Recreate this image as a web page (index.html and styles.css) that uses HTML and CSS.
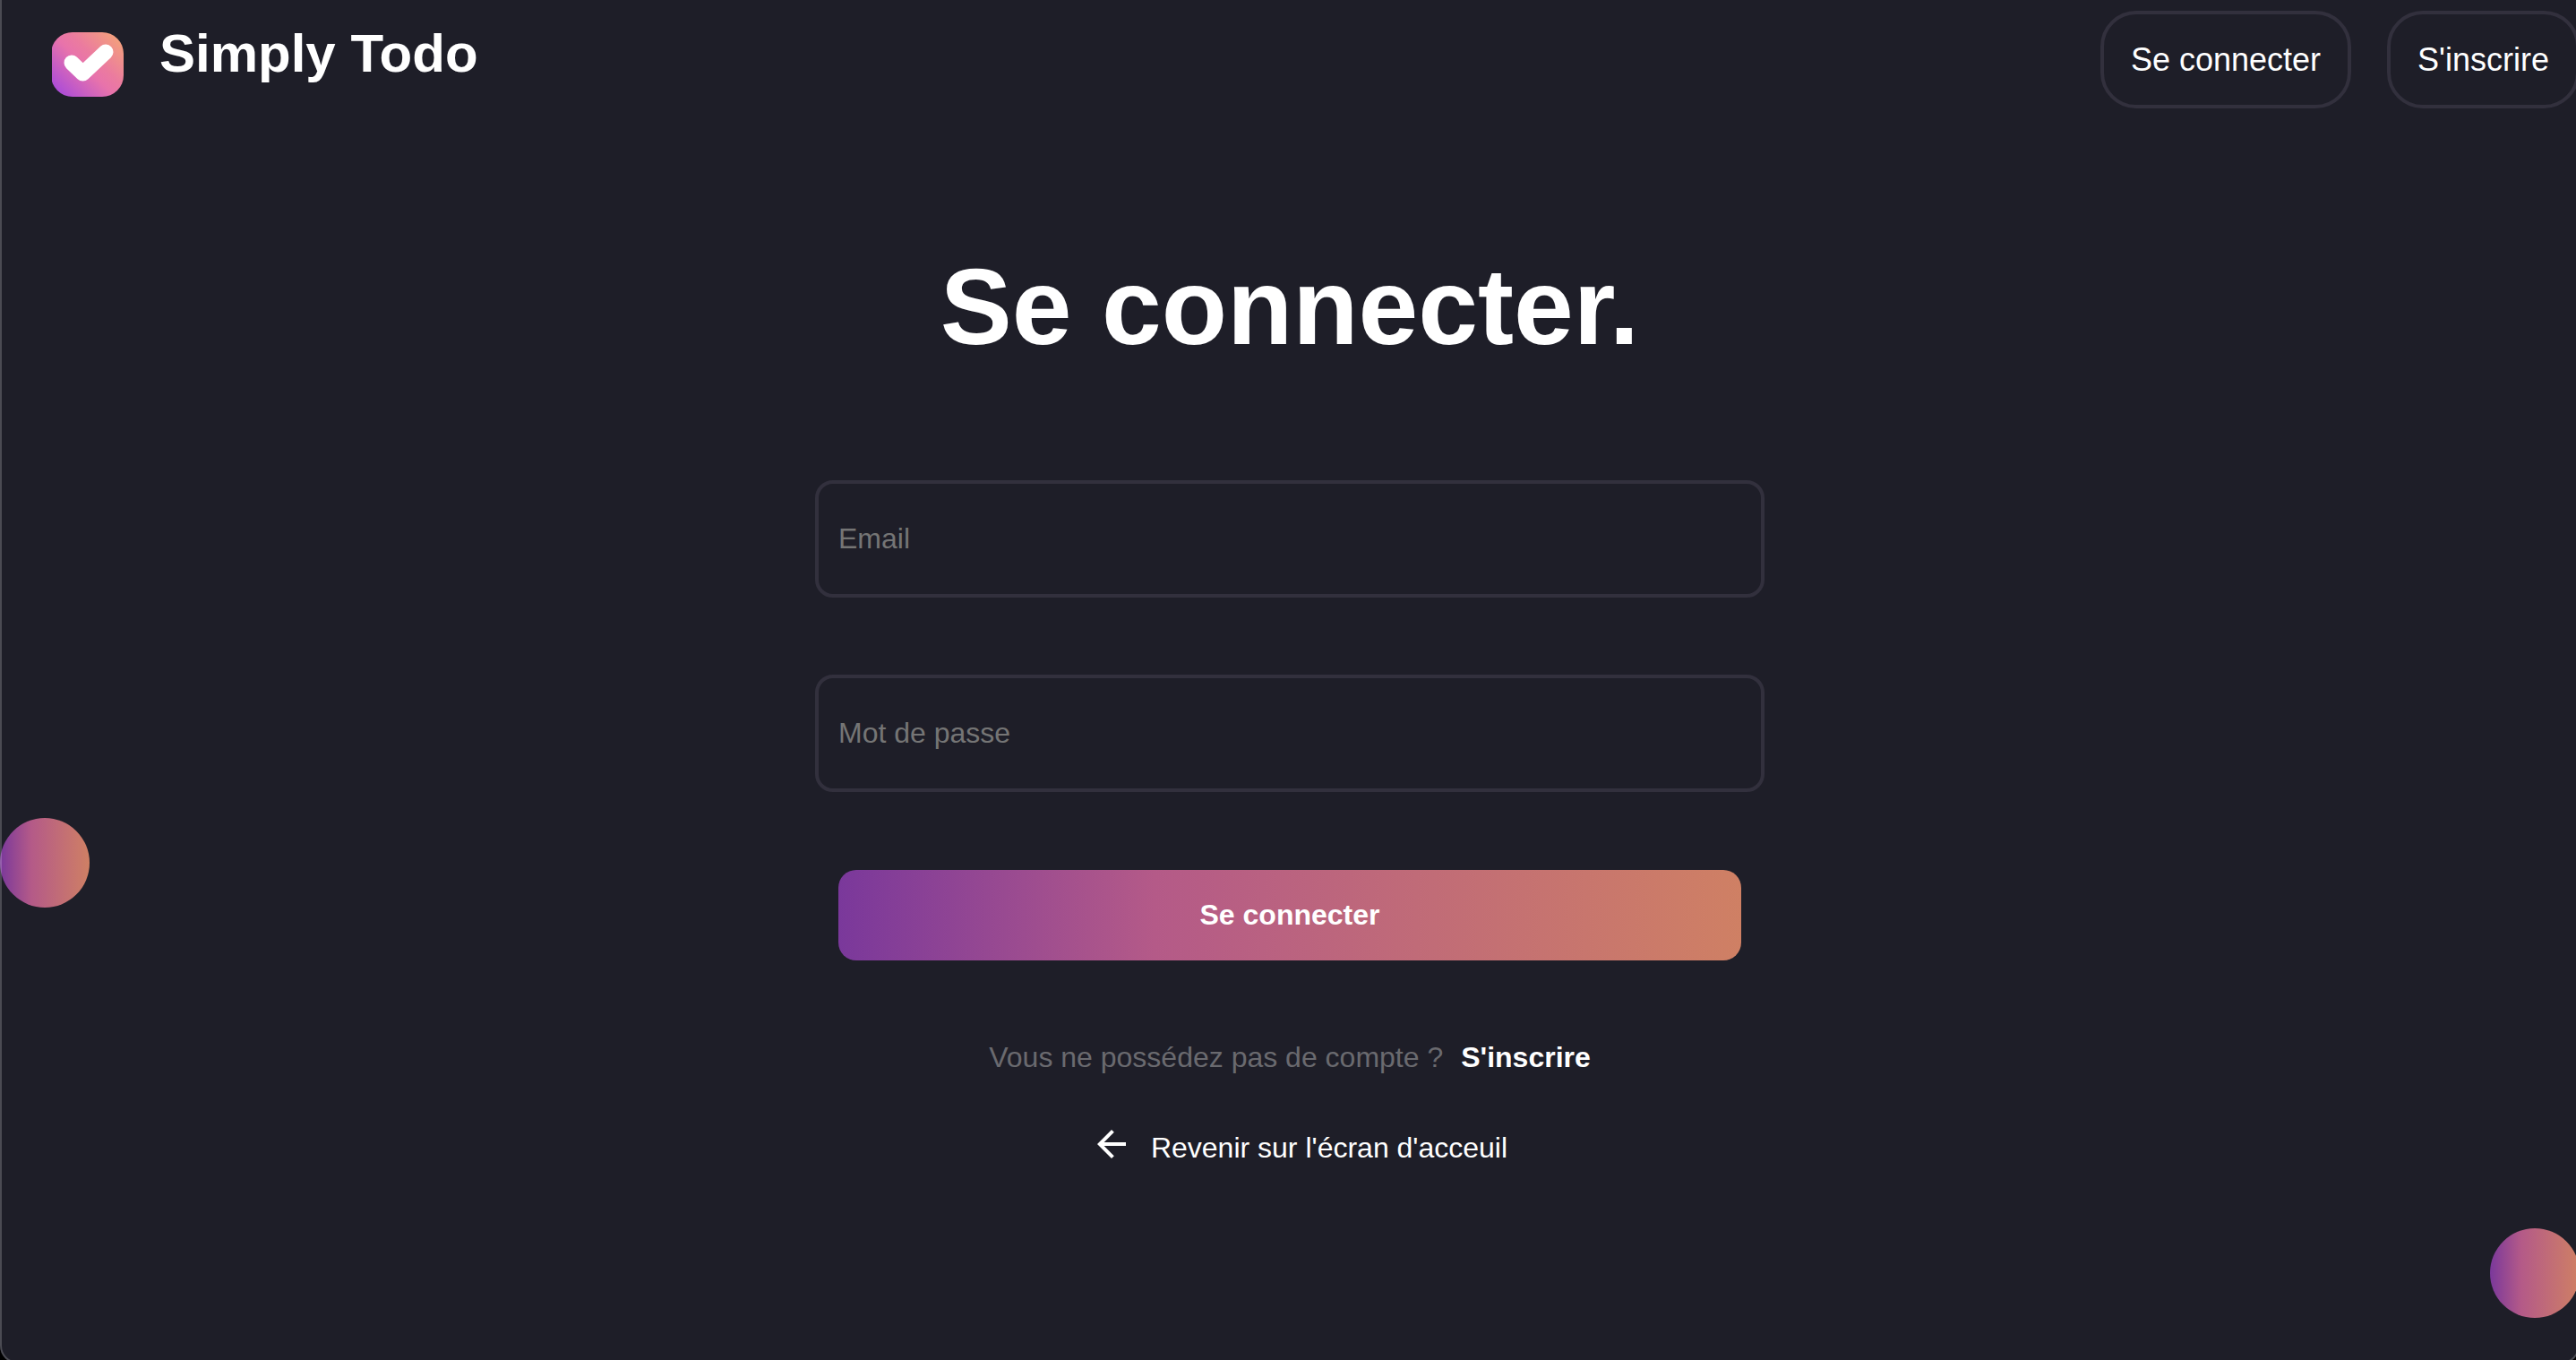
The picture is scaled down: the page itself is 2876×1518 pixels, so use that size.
FILE: index.html
```html
<!DOCTYPE html>
<html lang="fr">
<head>
  <meta charset="utf-8">
  <meta name="viewport" content="width=device-width, initial-scale=1">
  <title>Simply Todo</title>
  <link rel="stylesheet" href="styles.css">
</head>
<body>
  <div class="page">
    <header class="header">
      <div class="brand">
        <svg class="brand-logo" viewBox="0 0 80 72" aria-hidden="true">
          <defs>
            <linearGradient id="logo-fill" gradientUnits="userSpaceOnUse" x1="8" y1="68" x2="72" y2="4">
              <stop offset="0" stop-color="#ac4cd8"/>
              <stop offset="0.46" stop-color="#e873ab"/>
              <stop offset="0.62" stop-color="#eb7b9f"/>
              <stop offset="1" stop-color="#f3a07c"/>
            </linearGradient>
          </defs>
          <rect x="-1" width="81" height="72" rx="24" fill="url(#logo-fill)"/>
          <path d="M22 34 34.500 46 60 22" fill="none" stroke="#fff" stroke-width="17" stroke-linecap="round" stroke-linejoin="round"/>
        </svg>
        <span class="brand-name">Simply Todo</span>
      </div>
      <nav class="nav">
        <button class="nav-button" type="button">Se connecter</button>
        <button class="nav-button" type="button">S'inscrire</button>
      </nav>
    </header>

    <main class="login">
      <h1 class="login-title">Se connecter.</h1>
      <form class="login-form">
        <input class="field" type="email" placeholder="Email" aria-label="Email">
        <input class="field" type="password" placeholder="Mot de passe" aria-label="Mot de passe">
        <button class="submit" type="submit">Se connecter</button>
      </form>
      <p class="signup">Vous ne possédez pas de compte ? <a class="signup-link" href="#inscription">S'inscrire</a></p>
      <a class="back" href="#accueil">
        <svg class="back-icon" viewBox="0 0 24 24" aria-hidden="true">
          <path d="M20 11H7.830l5.590-5.590L12 4l-8 8 8 8 1.410-1.410L7.830 13H20v-2z" fill="currentColor"/>
        </svg>
        <span>Revenir sur l'écran d'acceuil</span>
      </a>
    </main>

    <div class="ball ball-left"></div>
    <div class="ball ball-right"></div>
  </div>
  <div class="frame"></div>
</body>
</html>
```

FILE: styles.css
```css
:root {
  --background: #1e1e28;
  --outline: #32303d;
  --gradient: linear-gradient(90deg, #7a389b 0%, #b45a88 35%, #cf8064 100%);
}

* {
  box-sizing: border-box;
}

body {
  margin: 0;
  background: var(--background);
  color: #fff;
  font-family: Helvetica, "Liberation Sans", Arial, sans-serif;
  font-size: 32px;
  line-height: 40px;
}

button,
input {
  font: inherit;
  color: inherit;
}

a {
  color: inherit;
  text-decoration: none;
}

.page {
  position: relative;
  min-height: 100vh;
  padding-top: 12px;
  overflow: hidden;
}

.header {
  display: flex;
  justify-content: space-between;
  align-items: flex-start;
  margin-right: -4px;
  padding-left: 58px;
}

.brand {
  display: flex;
  align-items: flex-start;
  gap: 40px;
  padding-top: 14px;
}

.brand-logo {
  width: 80px;
  height: 72px;
  margin-top: 10px;
}

.brand-name {
  font-size: 60px;
  font-weight: 700;
  line-height: 68px;
}

.nav {
  display: flex;
  gap: 40px;
}

.nav-button {
  padding: 30px;
  border: 4px solid var(--outline);
  border-radius: 40px;
  background: none;
  font-size: 36px;
  line-height: 41px;
}

.login {
  display: flex;
  flex-direction: column;
  align-items: center;
  margin-right: -4px;
  padding: 152px 20px 40px;
}

.login-title {
  margin: 0;
  font-size: 120px;
  line-height: 138px;
}

.login-form {
  display: flex;
  flex-direction: column;
  gap: 86px;
  width: 100%;
  max-width: 1060px;
  margin-top: 125px;
}

.field {
  width: 100%;
  padding: 43px 22px;
  border: 4px solid var(--outline);
  border-radius: 20px;
  background: none;
  line-height: 37px;
}

.field::placeholder {
  color: #757575;
  opacity: 1;
}

.submit {
  margin: 1px 26px 0;
  padding: 32px;
  border: 0;
  border-radius: 20px;
  background: var(--gradient);
  font-weight: 700;
  line-height: 37px;
}

.signup {
  display: flex;
  gap: 20px;
  margin: 88px 0 0;
  color: #6a6a6f;
}

.signup-link {
  color: #fff;
  font-weight: 700;
}

.back {
  display: flex;
  align-items: flex-end;
  gap: 20px;
  margin-top: 53px;
  padding-left: 20px;
}

.back-icon {
  width: 48px;
  height: 48px;
}

.ball {
  position: absolute;
  width: 100px;
  height: 100px;
  border-radius: 50%;
  background: var(--gradient);
}

.ball-left {
  top: 913px;
  left: 0;
}

.ball-right {
  right: -4px;
  bottom: 47px;
}

/* Thin window outline with rounded lower corners */
.frame {
  position: fixed;
  inset: -30px -4px -4px 0;
  border: 2px solid rgba(255, 255, 255, 0.2);
  border-radius: 20px;
  box-shadow: 0 0 0 20px #000;
  pointer-events: none;
}
```
